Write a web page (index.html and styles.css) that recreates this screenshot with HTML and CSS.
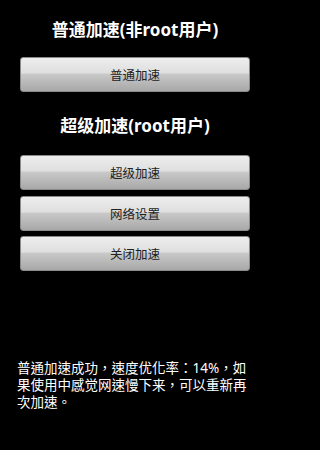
FILE: index.html
```html
<!DOCTYPE html>
<html>
<head>
<meta charset="utf-8">
<link rel="stylesheet" href="styles.css">
</head>
<body>
<div class="screen">
  <div class="title first">普通加速(非root用户)</div>
  <div class="btn single">普通加速</div>
  <div class="title second">超级加速(root用户)</div>
  <div class="group">
    <div class="btn">超级加速</div>
    <div class="btn">网络设置</div>
    <div class="btn">关闭加速</div>
  </div>
  <div class="message">普通加速成功，速度优化率：14%，如果使用中感觉网速慢下来，可以重新再次加速。</div>
</div>
</body>
</html>
```
FILE: styles.css
```css
html, body {
  margin: 0;
  padding: 0;
  background: #000;
}
.screen {
  width: 270px;
  height: 450px;
  display: flex;
  flex-direction: column;
  font-family: "Noto Sans", "Noto Sans CJK SC", sans-serif;
  color: #fff;
}
.title {
  text-align: center;
  font-size: 17px;
  font-weight: bold;
  line-height: 20px;
  height: 20px;
}
.title.first { margin-top: 20px; }
.title.second { margin-top: 24px; }
.btn {
  margin: 0 20px;
  height: 35px;
  box-sizing: border-box;
  border: 1px solid #8a8a8a;
  border-radius: 3px;
  background: linear-gradient(to bottom, #ededed 0%, #dfdfdf 45%, #c8c8c8 50%, #a8a8a8 100%);
  color: #222;
  font-size: 12.5px;
  display: flex;
  align-items: center;
  justify-content: center;
}
.btn.single { margin-top: 17px; }
.group {
  margin-top: 19px;
  display: flex;
  flex-direction: column;
  gap: 5.5px;
}
.message {
  margin-top: 89px;
  padding: 0 17px;
  font-family: "Noto Sans", "Noto Sans CJK TC", sans-serif;
  font-size: 13.5px;
  line-height: 17px;
  color: #fff;
}
```
